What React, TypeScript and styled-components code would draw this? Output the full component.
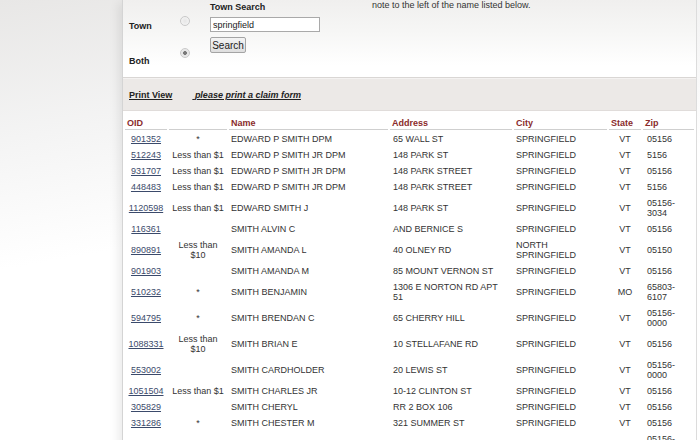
import styled, { createGlobalStyle } from "styled-components"

type Claim = {
  oid: string
  amount: string
  name: string
  address: string
  city: string
  state: string
  zip: string
}

const CLAIMS: Claim[] = [
  { oid: "901352", amount: "*", name: "EDWARD P SMITH DPM", address: "65 WALL ST", city: "SPRINGFIELD", state: "VT", zip: "05156" },
  { oid: "512243", amount: "Less than $1", name: "EDWARD P SMITH JR DPM", address: "148 PARK ST", city: "SPRINGFIELD", state: "VT", zip: "5156" },
  { oid: "931707", amount: "Less than $1", name: "EDWARD P SMITH JR DPM", address: "148 PARK STREET", city: "SPRINGFIELD", state: "VT", zip: "05156" },
  { oid: "448483", amount: "Less than $1", name: "EDWARD P SMITH JR DPM", address: "148 PARK STREET", city: "SPRINGFIELD", state: "VT", zip: "5156" },
  { oid: "1120598", amount: "Less than $1", name: "EDWARD SMITH J", address: "148 PARK ST", city: "SPRINGFIELD", state: "VT", zip: "05156-3034" },
  { oid: "116361", amount: "", name: "SMITH ALVIN C", address: "AND BERNICE S", city: "SPRINGFIELD", state: "VT", zip: "05156" },
  { oid: "890891", amount: "Less than $10", name: "SMITH AMANDA L", address: "40 OLNEY RD", city: "NORTH SPRINGFIELD", state: "VT", zip: "05150" },
  { oid: "901903", amount: "", name: "SMITH AMANDA M", address: "85 MOUNT VERNON ST", city: "SPRINGFIELD", state: "VT", zip: "05156" },
  { oid: "510232", amount: "*", name: "SMITH BENJAMIN", address: "1306 E NORTON RD APT 51", city: "SPRINGFIELD", state: "MO", zip: "65803-6107" },
  { oid: "594795", amount: "*", name: "SMITH BRENDAN C", address: "65 CHERRY HILL", city: "SPRINGFIELD", state: "VT", zip: "05156-0000" },
  { oid: "1088331", amount: "Less than $10", name: "SMITH BRIAN E", address: "10 STELLAFANE RD", city: "SPRINGFIELD", state: "VT", zip: "05156" },
  { oid: "553002", amount: "", name: "SMITH CARDHOLDER", address: "20 LEWIS ST", city: "SPRINGFIELD", state: "VT", zip: "05156-0000" },
  { oid: "1051504", amount: "Less than $1", name: "SMITH CHARLES JR", address: "10-12 CLINTON ST", city: "SPRINGFIELD", state: "VT", zip: "05156" },
  { oid: "305829", amount: "", name: "SMITH CHERYL", address: "RR 2 BOX 106", city: "SPRINGFIELD", state: "VT", zip: "05156" },
  { oid: "331286", amount: "*", name: "SMITH CHESTER M", address: "321 SUMMER ST", city: "SPRINGFIELD", state: "VT", zip: "05156" },
  { oid: "346770", amount: "", name: "SMITH CINDY W", address: "30 MAIN ST", city: "SPRINGFIELD", state: "VT", zip: "05156-0000" },
]

const App = () => {
  return (
    <>
      <GlobalStyle />
      <Page>
        <Panel>
          <SearchForm>
            <LabelCol>
              <span>Town</span>
              <span>Both</span>
            </LabelCol>
            <RadioCol>
              <Radio type="radio" name="mode" readOnly />
              <Radio type="radio" name="mode" defaultChecked readOnly />
            </RadioCol>
            <SearchCol>
              <SearchTitle>Town Search</SearchTitle>
              <TownInput defaultValue="springfield" />
              <SearchButton>Search</SearchButton>
            </SearchCol>
            <Note>note to the left of the name listed below.</Note>
          </SearchForm>

          <PrintBar>
            <PrintLink href="#">Print View</PrintLink>
            <ClaimLink href="#">{"\u00a0"}please print a claim form</ClaimLink>
          </PrintBar>

          <Results>
            <thead>
              <tr>
                <Th $w={42}>OID</Th>
                <Th $w={58}></Th>
                <Th $w={159}>Name</Th>
                <Th $w={122}>Address</Th>
                <Th $w={93}>City</Th>
                <Th $w={32}>State</Th>
                <Th $w={51}>Zip</Th>
              </tr>
            </thead>
            <tbody>
              {CLAIMS.map((c) => (
                <tr key={c.oid}>
                  <Td $align="center">
                    <OidLink href="#">{c.oid}</OidLink>
                  </Td>
                  <Td $align="center">{c.amount}</Td>
                  <Td>{c.name}</Td>
                  <AddressTd>{c.address}</AddressTd>
                  <Td>{c.city}</Td>
                  <Td $align="center">{c.state}</Td>
                  <ZipTd>{c.zip}</ZipTd>
                </tr>
              ))}
            </tbody>
          </Results>
        </Panel>
      </Page>
    </>
  )
}

export default App

const GlobalStyle = createGlobalStyle`
  html, body {
    margin: 0;
    padding: 0;
    height: 100%;
    overflow: hidden;
  }
  body {
    font-family: "Liberation Sans", Arial, sans-serif;
    font-size: 9px;
    color: #333;
    background: linear-gradient(170deg, #e8e7e6 0%, #f4f4f4 25%, #fff 48%);
  }
`

const Page = styled.div`
  padding: 0 3px 0 122px;
`

const Panel = styled.div`
  width: 575px;
  box-sizing: border-box;
  min-height: 460px;
  background: #fff;
  border-left: 1px solid #d4d4d4;
  border-right: 1px solid #dcdcdc;
  box-shadow: -6px 0 10px -3px rgba(0, 0, 0, 0.09);
`

const SearchForm = styled.div`
  display: flex;
  align-items: flex-start;
  height: 77px;
  padding-left: 6px;
  border-bottom: 1px solid #d9d6d4;
  background: linear-gradient(to bottom, #f0efee 0%, #f6f6f5 40%, #fff 85%);
`

const LabelCol = styled.div`
  display: flex;
  flex-direction: column;
  gap: 25px;
  width: 51px;
  padding-top: 21px;
  font-weight: bold;
  line-height: 10px;
  color: #222;
`

const RadioCol = styled.div`
  display: flex;
  flex-direction: column;
  gap: 22px;
  padding-top: 16px;
`

const Radio = styled.input`
  appearance: none;
  margin: 0;
  width: 10px;
  height: 10px;
  border-radius: 50%;
  border: 1px solid #c9c9c9;
  box-sizing: border-box;
  background: radial-gradient(circle, #e6e6e6 0%, #f2f2f2 70%);

  &:checked {
    background: radial-gradient(circle, #7a7a7a 0, #7a7a7a 1.6px, #e4e4e4 2.2px, #f0f0f0 100%);
  }
`

const SearchCol = styled.div`
  display: flex;
  flex-direction: column;
  align-items: flex-start;
  width: 162px;
  margin-left: 20px;
  padding-top: 2px;
`

const SearchTitle = styled.div`
  font-weight: bold;
  line-height: 10px;
  color: #222;
`

const TownInput = styled.input`
  margin-top: 5px;
  width: 110px;
  height: 15px;
  box-sizing: border-box;
  padding: 0 2px;
  border: 1px solid #a9a9a9;
  background: #fff;
  font-family: "Liberation Sans", Arial, sans-serif;
  font-size: 9px;
  color: #222;
`

const SearchButton = styled.button`
  margin-top: 5px;
  width: 36px;
  height: 16px;
  padding: 0;
  border: 1px solid #a4a4a4;
  border-radius: 2px;
  background: linear-gradient(to bottom, #f4f4f4, #dedede);
  font-family: "Liberation Sans", Arial, sans-serif;
  font-size: 10px;
  color: #222;
`

const Note = styled.div`
  line-height: 10px;
  color: #333;
`

const PrintBar = styled.div`
  display: flex;
  gap: 20px;
  padding: 11px 6px 10px;
  border-top: 1px solid #f4f2f1;
  border-bottom: 1px solid #e0dcda;
  background: #ece9e7;
  font-weight: bold;
  line-height: 10px;
`

const PrintLink = styled.a`
  color: #222;
  text-decoration: underline;
`

const ClaimLink = styled.a`
  color: #222;
  font-style: italic;
  text-decoration: underline;
`

const Results = styled.table`
  margin-top: 3px;
  width: 573px;
  table-layout: fixed;
  border-collapse: separate;
  border-spacing: 2px;
  font-size: 9px;
  line-height: 10px;
`

const Th = styled.th<{ $w: number }>`
  width: ${(p) => p.$w}px;
  box-sizing: border-box;
  padding: 2px 2px 1px;
  text-align: left;
  font-weight: bold;
  color: #8a2b2b;
  border-bottom: 1px solid #cfcfcf;
`

const Td = styled.td<{ $align?: "left" | "center" }>`
  padding: 2px;
  text-align: ${(p) => p.$align || "left"};
  vertical-align: middle;
  color: #333;
`

const AddressTd = styled(Td)`
  padding-left: 3px;
  padding-right: 5px;
`

const ZipTd = styled(Td)`
  padding-left: 4px;
`

const OidLink = styled.a`
  color: #3b4a6b;
  text-decoration: underline;
`
